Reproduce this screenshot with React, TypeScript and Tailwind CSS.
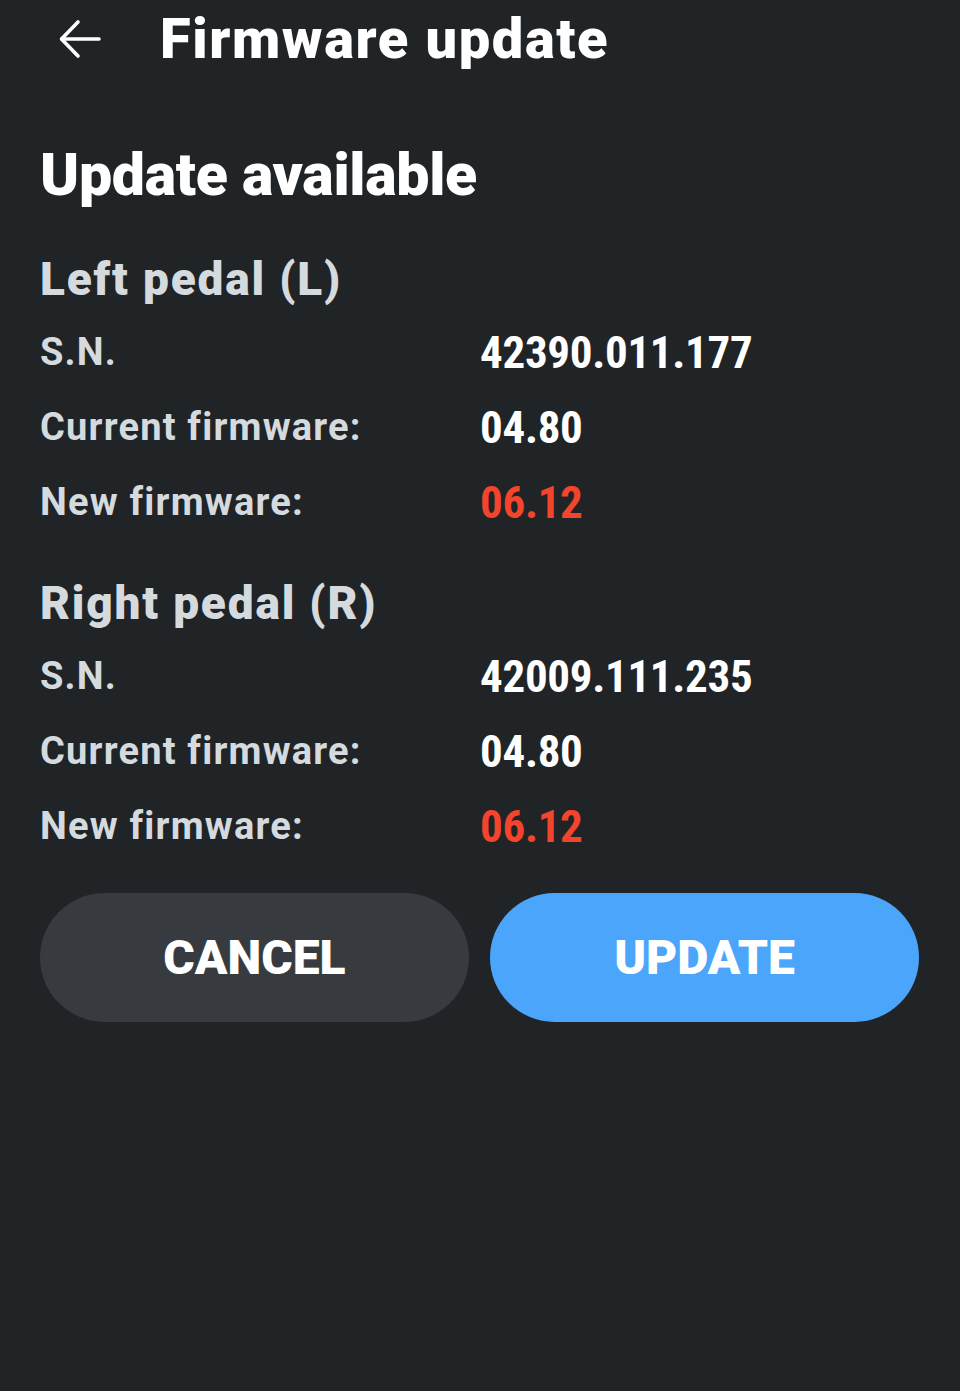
type Row = { label: string; value: string; accent?: boolean };

const font = "font-['Roboto',sans-serif]";

const Pedal = ({ title, rows }: { title: string; rows: Row[] }) => (
  <div className="flex flex-col">
    <h3 className={`text-[46px] leading-[72px] font-black text-[#d5dade] tracking-[1.8px] ${font}`}>{title}</h3>
    {rows.map((r) => (
      <div key={r.label} className="grid grid-cols-[440px_1fr] h-[75px]">
        <span className={`text-[38px] leading-[75px] font-bold text-[#d5dade] tracking-[1.2px] ${font}`}>{r.label}</span>
        <span
          className={`text-[45px] leading-[75px] font-bold tracking-[-0.3px] font-['Roboto_Condensed',sans-serif] ${
            r.accent ? "text-[#f4452c]" : "text-white"
          }`}
        >
          {r.value}
        </span>
      </div>
    ))}
  </div>
);

const BackArrow = () => (
  <svg width="44" height="40" viewBox="0 0 44 40" fill="none" stroke="white" strokeWidth="3.6" strokeLinecap="round" strokeLinejoin="round">
    <path d="M41 20H4" />
    <path d="M20 3 3.5 20 20 37" />
  </svg>
);

export default function App() {
  return (
    <div className="min-h-screen bg-[#202427] flex flex-col">
      <header className="h-[78px] flex items-center">
        <button className="w-[160px] h-full flex items-center pl-[58px]">
          <BackArrow />
        </button>
        <h1 className={`text-[56px] leading-[78px] font-black text-white tracking-[1.6px] ${font}`}>Firmware update</h1>
      </header>

      <main className="flex flex-col px-10">
        <h2 className={`mt-[57px] text-[59px] leading-[80px] font-black text-white tracking-[-0.3px] ${font}`}>
          Update available
        </h2>

        <div className="mt-[28px]">
          <Pedal
            title="Left pedal (L)"
            rows={[
              { label: "S.N.", value: "42390.011.177" },
              { label: "Current firmware:", value: "04.80" },
              { label: "New firmware:", value: "06.12", accent: true },
            ]}
          />
        </div>

        <div className="mt-[27px]">
          <Pedal
            title="Right pedal (R)"
            rows={[
              { label: "S.N.", value: "42009.111.235" },
              { label: "Current firmware:", value: "04.80" },
              { label: "New firmware:", value: "06.12", accent: true },
            ]}
          />
        </div>

        <div className="mt-[29px] flex gap-[21px]">
          <button className={`w-[429px] h-[129px] rounded-full bg-[#373b3f] text-white text-[48px] font-black ${font}`}>
            CANCEL
          </button>
          <button className={`w-[429px] h-[129px] rounded-full bg-[#4aa5fb] text-white text-[48px] font-black ${font}`}>
            UPDATE
          </button>
        </div>
      </main>
    </div>
  );
}
